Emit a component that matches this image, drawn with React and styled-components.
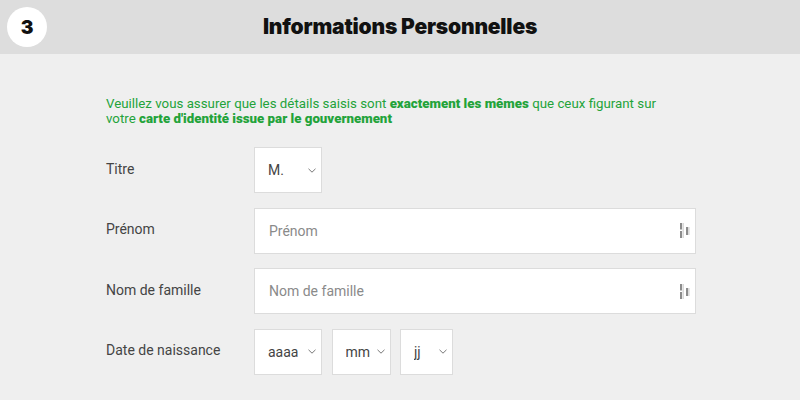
import styled, { createGlobalStyle } from 'styled-components';

const GlobalStyle = createGlobalStyle`
  html, body {
    margin: 0;
    padding: 0;
    background: #efefef;
  }
  body {
    font-family: Roboto, "Liberation Sans", sans-serif;
    color: #333;
  }
`;

const Page = styled.div`
  width: 800px;
  height: 400px;
  overflow: hidden;
  background: #efefef;
`;

const Header = styled.header`
  height: 54px;
  background: #dddddd;
  display: flex;
  align-items: center;
  justify-content: center;
  position: relative;
`;

const StepBadge = styled.div`
  position: absolute;
  left: 7px;
  top: 7px;
  width: 40px;
  height: 40px;
  border-radius: 50%;
  background: #fff;
  display: flex;
  align-items: center;
  justify-content: center;
  font-family: Inter, sans-serif;
  font-weight: 900;
  font-size: 19px;
  color: #111;
`;

const Title = styled.h1`
  margin: 0 0 1px;
  font-family: Inter, sans-serif;
  font-weight: 900;
  font-size: 21px;
  color: #111;
  letter-spacing: -0.2px;
`;

const Content = styled.main`
  width: 590px;
  margin: 0 auto;
  padding: 42px 0 0 2px;
  display: flex;
  flex-direction: column;
`;

const Notice = styled.p`
  margin: 0 0 21px;
  color: #23a33a;
  font-size: 13.3px;
  line-height: 15px;

  strong {
    font-weight: 900;
  }
`;

const Form = styled.form`
  display: grid;
  grid-template-columns: 148px 1fr;
  row-gap: 14.6px;
  align-items: center;
`;

const Label = styled.label`
  font-size: 14px;
  color: #444;
  padding-bottom: 3px;
`;

const Field = styled.div`
  display: flex;
  gap: ${(p) => p.$gap || 9}px;
`;

const SelectBox = styled.label`
  width: ${(p) => p.$w}px;
  height: 46px;
  box-sizing: border-box;
  background: #fff;
  border: 1px solid #dcdcdc;
  display: flex;
  align-items: center;
  padding: 0 5px 0 13px;

  select {
    appearance: none;
    border: none;
    background: transparent;
    outline: none;
    flex: 1;
    min-width: 0;
    font-family: Roboto, sans-serif;
    font-size: 14px;
    color: #444;
    padding: 0;
  }
`;

const TextBox = styled.label`
  flex: 1;
  height: 46px;
  box-sizing: border-box;
  background: #fff;
  border: 1px solid #dcdcdc;
  display: flex;
  align-items: center;
  padding: 0 5px 0 14px;

  input {
    flex: 1;
    border: none;
    outline: none;
    background: transparent;
    font-family: Roboto, sans-serif;
    font-size: 14px;
    color: #444;
    padding: 0;
  }
  input::placeholder {
    color: #8a8a8a;
  }
`;

const Chevron = () => (
  <svg width="8" height="5" viewBox="0 0 8 5" fill="none">
    <path d="M0.5 0.8 L4 4.2 L7.5 0.8" stroke="#777" strokeWidth="1" />
  </svg>
);

const FillIcon = () => (
  <svg width="10" height="15" viewBox="0 0 10 15">
    <rect x="0" y="0" width="2" height="6.5" fill="#8c8c8c" />
    <rect x="0" y="8" width="2" height="7" fill="#8c8c8c" />
    <rect x="2.6" y="0" width="1" height="15" fill="#c4c4c4" />
    <rect x="6" y="4" width="2" height="8" fill="#8c8c8c" />
    <rect x="8.4" y="4" width="1" height="8" fill="#c4c4c4" />
  </svg>
);

const Select = ({ w, value }) => (
  <SelectBox $w={w}>
    <select defaultValue={value}>
      <option>{value}</option>
    </select>
    <Chevron />
  </SelectBox>
);

const Text = ({ placeholder }) => (
  <TextBox>
    <input type="text" placeholder={placeholder} />
    <FillIcon />
  </TextBox>
);

export default function App() {
  return (
    <Page>
      <GlobalStyle />
      <Header>
        <StepBadge>3</StepBadge>
        <Title>Informations Personnelles</Title>
      </Header>
      <Content>
        <Notice>
          Veuillez vous assurer que les détails saisis sont <strong>exactement les mêmes</strong> que ceux figurant sur
          <br />
          votre <strong>carte d'identité issue par le gouvernement</strong>
        </Notice>
        <Form>
          <Label>Titre</Label>
          <Field>
            <Select w={68} value="M." />
          </Field>

          <Label>Prénom</Label>
          <Field>
            <Text placeholder="Prénom" />
          </Field>

          <Label>Nom de famille</Label>
          <Field>
            <Text placeholder="Nom de famille" />
          </Field>

          <Label>Date de naissance</Label>
          <Field $gap={9.5}>
            <Select w={68} value="aaaa" />
            <Select w={59} value="mm" />
            <Select w={53} value="jj" />
          </Field>
        </Form>
      </Content>
    </Page>
  );
}
